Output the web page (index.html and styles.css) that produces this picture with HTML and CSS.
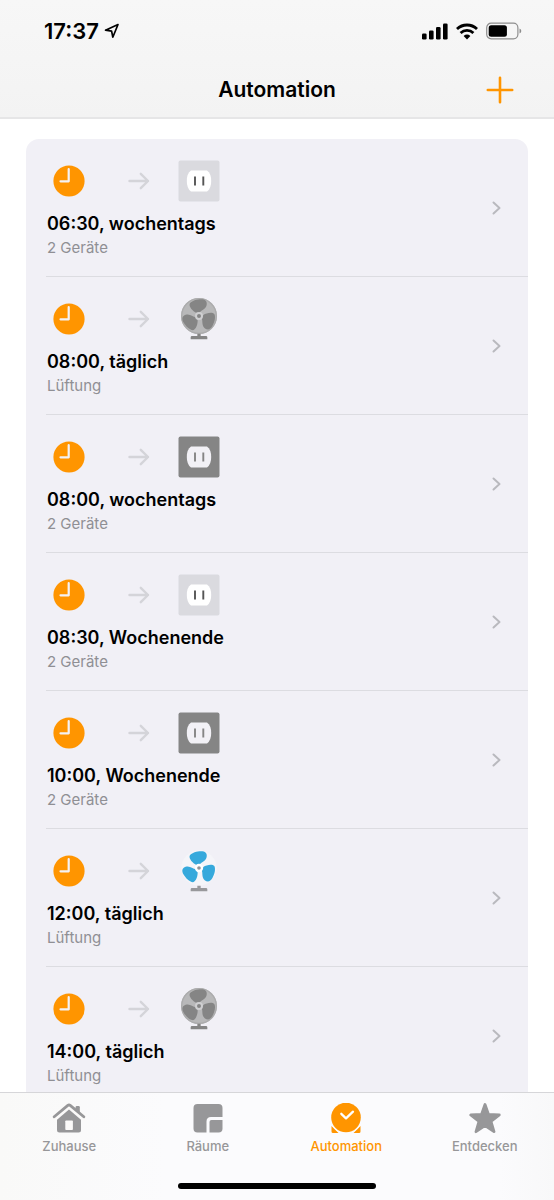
FILE: index.html
```html
<!DOCTYPE html>
<html lang="de">
<head>
<meta charset="utf-8">
<meta name="viewport" content="width=device-width, initial-scale=1">
<title>Automation</title>
<link rel="stylesheet" href="styles.css">
</head>
<body>
<svg class="sprite" aria-hidden="true">
  <symbol id="clock" viewBox="0 0 32 32">
    <circle cx="16" cy="16" r="15.6" fill="#ff9500"/>
    <path d="M15.7 4.2V16.3H7.5" fill="none" stroke="#f4f2f5" stroke-width="2.2" stroke-linecap="round" stroke-linejoin="round"/>
  </symbol>
  <symbol id="arrow" viewBox="0 0 22 18">
    <path d="M1.5 9H20M12.8 1.8L20 9l-7.2 7.2" fill="none" stroke="#d4d4d9" stroke-width="2.4" stroke-linecap="round" stroke-linejoin="round"/>
  </symbol>
  <symbol id="chevron" viewBox="0 0 10 14">
    <path d="M1.5 1.5L7.5 7l-6 5.500" fill="none" stroke="#b9b9be" stroke-width="2" stroke-linecap="round" stroke-linejoin="round"/>
  </symbol>
  <symbol id="outlet-on" viewBox="0 0 42 42">
    <rect x=".5" y=".5" width="41" height="41" rx="2" fill="#dadadf"/>
    <path d="M13 10.500H29Q33.200 13.500 33.200 21T29 31.500H13Q8.800 28.500 8.800 21T13 10.500Z" fill="#fff"/>
    <path d="M17 16.500v9M25.300 16.500v9" stroke="#555" stroke-width="1.900"/>
  </symbol>
  <symbol id="outlet-off" viewBox="0 0 42 42">
    <rect x=".5" y=".5" width="41" height="41" rx="2" fill="#858585"/>
    <path d="M13 10.500H29Q33.200 13.500 33.200 21T29 31.500H13Q8.800 28.500 8.800 21T13 10.500Z" fill="#f2f1f6"/>
    <path d="M17 16.500v9M25.300 16.500v9" stroke="#858585" stroke-width="1.900"/>
  </symbol>
  <symbol id="fan-off" viewBox="-63 -54 126 126">
    <circle r="54" fill="#b8b8b9"/>
    <circle r="52" fill="none" stroke="#acacad" stroke-width="4"/>
    <g fill="#858585">
      <path id="blade" d="M-9-10C-18-14-31-28-28-37C-22-46-6-50 6-50C19-50 25-44 23-33C20-19 7-19 1-9Z"/>
      <use href="#blade" transform="rotate(120)"/>
      <use href="#blade" transform="rotate(240)"/>
    </g>
    <circle r="9" fill="#858585" stroke="#cfcfd1" stroke-width="6"/>
    <path d="M-5 53H5V60H21Q25 60 25 64V70H-25V64Q-25 60-21 60H-5Z" fill="#858585"/>
  </symbol>
  <symbol id="fan-on" viewBox="-63 -54 126 126">
    <circle r="53" fill="#f5f5f9"/>
    <g fill="#36a9dc">
      <use href="#blade"/>
      <use href="#blade" transform="rotate(120)"/>
      <use href="#blade" transform="rotate(240)"/>
    </g>
    <circle r="9" fill="#929295" stroke="#fff" stroke-width="7"/>
    <path d="M-5 53H5V60H21Q25 60 25 64V70H-25V64Q-25 60-21 60H-5Z" fill="#98989b"/>
  </symbol>
</svg>

<div class="app">
  <header class="top">
    <div class="status">
      <div class="status-left">
        <span class="time">17:37</span>
        <svg class="location" viewBox="0 0 16 16"><path d="M14 1.500L1.500 7.200 7.600 8.100 8.800 14.200Z" fill="none" stroke="#000" stroke-width="1.700" stroke-linejoin="round"/></svg>
      </div>
      <div class="status-right">
        <svg class="signal" viewBox="0 0 26 17"><rect y="10.500" width="4.600" height="6" rx="1.300"/><rect x="7" y="7.500" width="4.600" height="9" rx="1.300"/><rect x="14" y="4" width="4.600" height="12.500" rx="1.300"/><rect x="21" y=".5" width="4.600" height="16" rx="1.300"/></svg>
        <svg class="wifi" viewBox="0 0 22 17"><g fill="none" stroke="#000" stroke-width="2.800"><path d="M1 6A14.500 14.500 0 0 1 21 6"/><path d="M4.600 9.900A9.300 9.300 0 0 1 17.400 9.900"/></g><path d="M7.600 12.900Q11 10.200 14.400 12.900L11 16.500Z"/></svg>
        <svg class="battery" viewBox="0 0 36 18"><rect x=".7" y="1.200" width="31.200" height="15.600" rx="4.500" fill="none" stroke="#8d8d8d" stroke-width="1.200"/><rect x="2.700" y="3.200" width="18.200" height="11.600" rx="2.500"/><path d="M33.500 6.500Q35.300 7.200 35.300 9T33.500 11.500Z" fill="#8d8d8d"/></svg>
      </div>
    </div>
    <div class="nav">
      <h1 class="nav-title">Automation</h1>
      <button class="add" type="button" aria-label="Automation hinzufügen">
        <svg class="plus" viewBox="0 0 28 28"><path d="M14 1.800V26.200M1.800 14H26.200" stroke="#ff9500" stroke-width="2.600" stroke-linecap="round"/></svg>
      </button>
    </div>
  </header>

  <main class="content">
    <ul class="list">
      <li class="item"><a class="row" href="#"><span class="body"><span class="icons"><svg class="clock"><use href="#clock"/></svg><svg class="arrow"><use href="#arrow"/></svg><svg class="device"><use href="#outlet-on"/></svg></span><span class="name">06:30, wochentags</span><span class="detail">2 Geräte</span></span><svg class="chevron"><use href="#chevron"/></svg></a></li>
      <li class="item"><a class="row" href="#"><span class="body"><span class="icons"><svg class="clock"><use href="#clock"/></svg><svg class="arrow"><use href="#arrow"/></svg><svg class="device"><use href="#fan-off"/></svg></span><span class="name">08:00, täglich</span><span class="detail">Lüftung</span></span><svg class="chevron"><use href="#chevron"/></svg></a></li>
      <li class="item"><a class="row" href="#"><span class="body"><span class="icons"><svg class="clock"><use href="#clock"/></svg><svg class="arrow"><use href="#arrow"/></svg><svg class="device"><use href="#outlet-off"/></svg></span><span class="name">08:00, wochentags</span><span class="detail">2 Geräte</span></span><svg class="chevron"><use href="#chevron"/></svg></a></li>
      <li class="item"><a class="row" href="#"><span class="body"><span class="icons"><svg class="clock"><use href="#clock"/></svg><svg class="arrow"><use href="#arrow"/></svg><svg class="device"><use href="#outlet-on"/></svg></span><span class="name">08:30, Wochenende</span><span class="detail">2 Geräte</span></span><svg class="chevron"><use href="#chevron"/></svg></a></li>
      <li class="item"><a class="row" href="#"><span class="body"><span class="icons"><svg class="clock"><use href="#clock"/></svg><svg class="arrow"><use href="#arrow"/></svg><svg class="device"><use href="#outlet-off"/></svg></span><span class="name">10:00, Wochenende</span><span class="detail">2 Geräte</span></span><svg class="chevron"><use href="#chevron"/></svg></a></li>
      <li class="item"><a class="row" href="#"><span class="body"><span class="icons"><svg class="clock"><use href="#clock"/></svg><svg class="arrow"><use href="#arrow"/></svg><svg class="device"><use href="#fan-on"/></svg></span><span class="name">12:00, täglich</span><span class="detail">Lüftung</span></span><svg class="chevron"><use href="#chevron"/></svg></a></li>
      <li class="item"><a class="row" href="#"><span class="body"><span class="icons"><svg class="clock"><use href="#clock"/></svg><svg class="arrow"><use href="#arrow"/></svg><svg class="device"><use href="#fan-off"/></svg></span><span class="name">14:00, täglich</span><span class="detail">Lüftung</span></span><svg class="chevron"><use href="#chevron"/></svg></a></li>
    </ul>
  </main>

  <footer class="bottom">
    <nav class="tabs">
      <a class="tab" href="#">
        <svg class="tab-icon" viewBox="0 0 34 32"><path d="M17 6.500L29 16.800V27Q29 29.500 26.500 29.500H7.500Q5 29.500 5 27V16.800Z"/><path d="M2 14.500L15.800 2.600Q17 1.600 18.200 2.600L32 14.500" fill="none" stroke="#fbfaf9" stroke-width="6" stroke-linecap="round"/><path d="M2.200 13.800L15.800 2.400Q17 1.500 18.200 2.400L31.800 13.800" fill="none" stroke="currentColor" stroke-width="2.800" stroke-linecap="round"/><path d="M23.600 4.200Q23.600 3 24.800 3H26.600Q27.800 3 27.800 4.200V10.500L23.600 7Z"/><rect x="13.300" y="17.500" width="7.600" height="9.500" rx=".8" fill="#fbfaf9"/></svg>
        <span class="tab-label">Zuhause</span>
      </a>
      <a class="tab" href="#">
        <svg class="tab-icon" viewBox="0 0 34 32"><path d="M6.500 1H27.500Q31.500 1 31.500 5V14H20Q15.500 14 15.500 18.500V29.500H6.500Q2.500 29.500 2.500 25.500V5Q2.500 1 6.500 1Z"/><path d="M31.500 17V25.500Q31.500 29.500 27.500 29.500H18.500V19Q18.500 17 20.500 17Z"/></svg>
        <span class="tab-label">Räume</span>
      </a>
      <a class="tab tab-active" href="#" aria-current="page">
        <svg class="tab-icon" viewBox="0 0 34 32"><path d="M2.500 23L9.500 30H4Q2.500 30 2.500 28.500ZM31.500 23L24.500 30H30Q31.500 30 31.500 28.500Z"/><circle cx="17" cy="14.500" r="16.200" fill="#fbfbfd"/><circle cx="17" cy="14.500" r="14.800"/><path d="M12.300 10.800L17 15.300 24 8.700" fill="none" stroke="#fff" stroke-width="2.300" stroke-linecap="round" stroke-linejoin="round"/></svg>
        <span class="tab-label">Automation</span>
      </a>
      <a class="tab" href="#">
        <svg class="tab-icon" viewBox="0 0 34 32"><path d="M17 1.500L20.500 11.500 31.300 12 23 18.500 26 28.700 17 22.700 8 28.700 11 18.500 2.700 12 13.500 11.500Z" stroke="currentColor" stroke-width="2.800" stroke-linejoin="round"/></svg>
        <span class="tab-label">Entdecken</span>
      </a>
    </nav>
    <div class="home-bar"></div>
  </footer>
</div>
</body>
</html>
```

FILE: styles.css
```css
* {
  box-sizing: border-box;
}

body {
  margin: 0;
  background: #fff;
  color: #000;
  font-family: Inter, "Liberation Sans", sans-serif;
}

a {
  color: inherit;
  text-decoration: none;
}

svg {
  display: block;
  flex: none;
}

.sprite {
  position: absolute;
  width: 0;
  height: 0;
}

.app {
  display: flex;
  flex-direction: column;
  height: 100vh;
}

.top {
  flex: none;
  background: linear-gradient(#f7f7f7, #f3f3f3);
  border-bottom: 2px solid #e6e6e7;
}

.status {
  display: flex;
  align-items: center;
  justify-content: space-between;
  height: 62px;
  padding: 0 32px 0 44px;
}

.status-left,
.status-right {
  display: flex;
  align-items: center;
}

.status-left {
  gap: 5px;
}

.status-right {
  gap: 8px;
}

.time {
  font-size: 22px;
  font-weight: 600;
  line-height: 24px;
}

.location {
  width: 16px;
  height: 16px;
}

.signal {
  width: 26px;
  height: 17px;
}

.wifi {
  width: 22px;
  height: 17px;
}

.battery {
  width: 36px;
  height: 18px;
}

.nav {
  display: grid;
  grid-template-columns: 1fr auto 1fr;
  align-items: center;
  height: 55px;
  padding: 0 40px;
}

.nav-title {
  grid-column: 2;
  margin: 0;
  font-size: 21px;
  font-weight: 600;
  line-height: 28px;
}

.add {
  justify-self: end;
  padding: 0;
  border: 0;
  background: none;
}

.plus {
  width: 28px;
  height: 28px;
}

.content {
  flex: 1;
  min-height: 0;
  overflow: auto;
  scrollbar-width: none;
  padding: 20px 26px;
}

.list {
  margin: 0;
  padding: 0 0 0 20px;
  list-style: none;
  background: #f1f0f6;
  border-radius: 13px;
}

.item + .item {
  border-top: 1px solid #dcdce1;
}

.row {
  display: flex;
  align-items: center;
  justify-content: space-between;
  padding: 21px 26px 16px 1px;
}

.body {
  display: flex;
  flex-direction: column;
}

.icons {
  display: flex;
  align-items: center;
  height: 42px;
  margin-bottom: 10px;
  padding-left: 6px;
}

.clock {
  width: 32px;
  height: 32px;
  margin-right: 43px;
}

.arrow {
  width: 22px;
  height: 18px;
  margin-right: 28px;
}

.device {
  width: 42px;
  height: 42px;
}

.name {
  font-size: 18px;
  font-weight: 600;
  line-height: 24px;
  white-space: nowrap;
}

.detail {
  color: #8f8f94;
  font-size: 15px;
  line-height: 24px;
}

.chevron {
  width: 10px;
  height: 14px;
  margin-bottom: 4px;
}

.bottom {
  flex: none;
  background: linear-gradient(90deg, #f9f9f8, #fbfbfd 30%, #fbfbfd 90%, #f8f8f9);
  border-top: 1px solid #d6d6d9;
}

.tabs {
  display: grid;
  grid-template-columns: repeat(4, 1fr);
  padding-top: 10px;
}

.tab {
  display: flex;
  flex-direction: column;
  align-items: center;
  gap: 1px;
  color: #979799;
}

.tab-active {
  color: #ff9500;
}

.tab-icon {
  width: 34px;
  height: 32px;
  fill: currentColor;
}

.tab-label {
  font-size: 13px;
  font-weight: 500;
  line-height: 20px;
}

.home-bar {
  width: 198px;
  height: 6px;
  margin: 27px auto 11px;
  border-radius: 3px;
  background: #000;
}
```
